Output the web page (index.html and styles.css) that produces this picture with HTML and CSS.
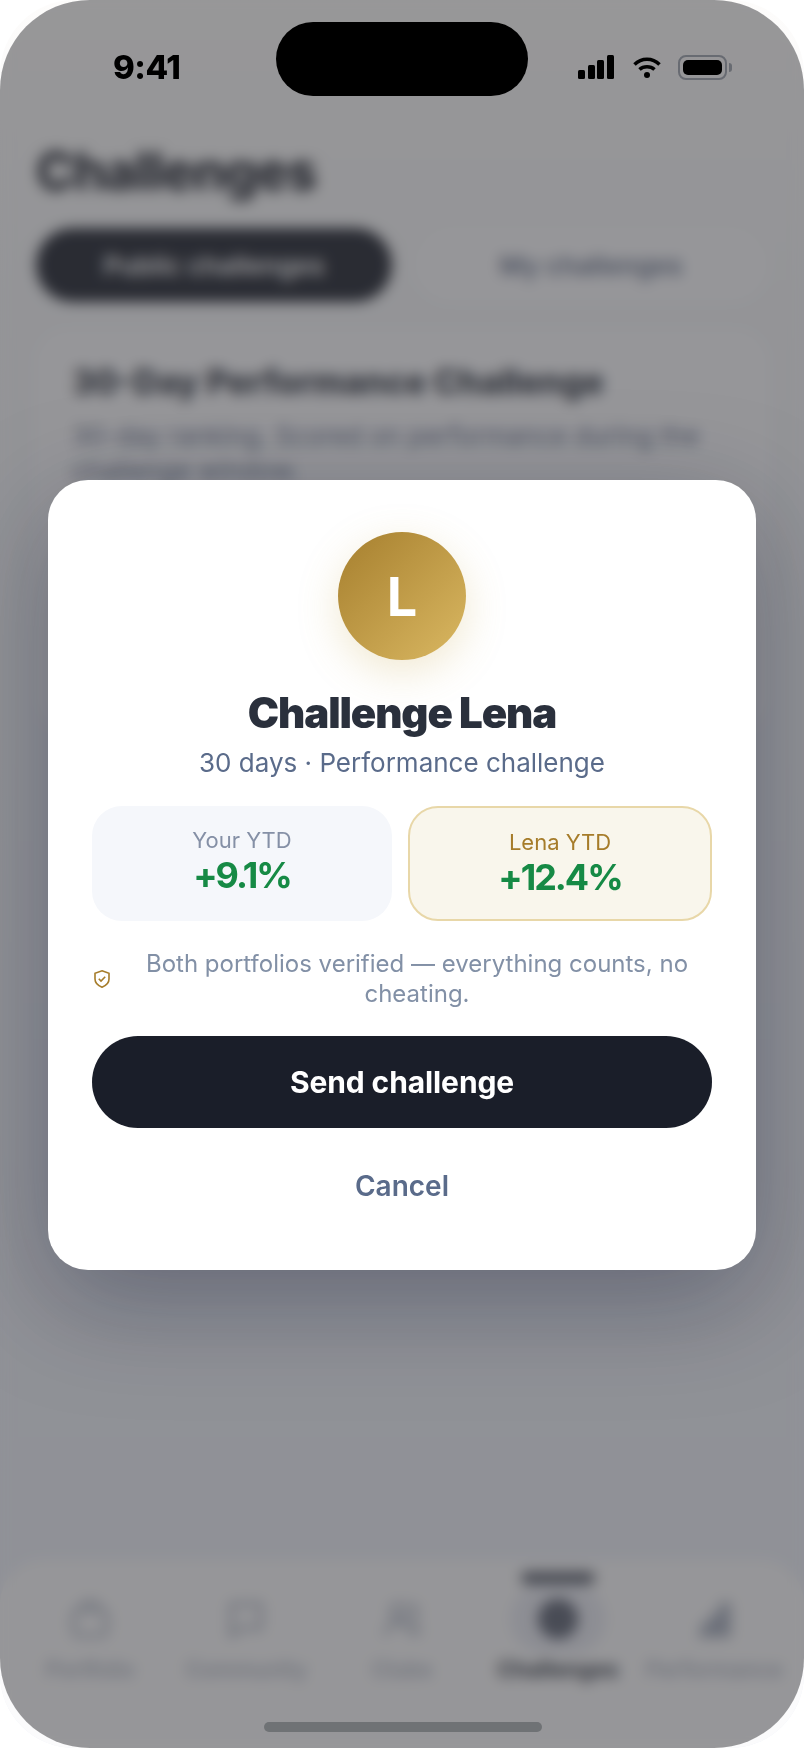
FILE: index.html
```html
<!DOCTYPE html>
<html lang="en">
<head>
<meta charset="UTF-8">
<meta name="viewport" content="width=device-width, initial-scale=1.0">
<title>Challenge Lena</title>
<link rel="stylesheet" href="styles.css">
</head>
<body>
<div class="phone">
  <!-- screen behind the modal -->
  <div class="screen">
    <div class="content">
      <h1 class="page-title">Challenges</h1>
      <div class="tabs">
        <div class="tab tab-active">Public challenges</div>
        <div class="tab">My challenges</div>
      </div>
      <div class="card">
        <h3 class="card-title">30-Day Performance Challenge</h3>
        <p class="card-text">30-day ranking. Scored on performance during the challenge window.</p>
      </div>
    </div>
    <nav class="tabbar">
      <div class="nav-item">
        <svg class="nav-icon" viewBox="0 0 24 24"><rect x="3" y="7" width="18" height="14" rx="3"/><path d="M8 7V5a2 2 0 0 1 2-2h4a2 2 0 0 1 2 2v2"/></svg>
        <span>Portfolio</span>
      </div>
      <div class="nav-item">
        <svg class="nav-icon" viewBox="0 0 24 24"><path d="M4 4h16v13H9l-5 4z"/></svg>
        <span>Community</span>
      </div>
      <div class="nav-item">
        <svg class="nav-icon" viewBox="0 0 24 24"><circle cx="10" cy="8" r="4"/><path d="M3 21c0-4 3-7 7-7s7 3 7 7M16 4a4 4 0 0 1 0 8M18 14c2 1 3 4 3 7"/></svg>
        <span>Clubs</span>
      </div>
      <div class="nav-item nav-active">
        <div class="nav-marker"></div>
        <div class="nav-halo"><svg class="nav-icon" viewBox="0 0 24 24"><circle cx="12" cy="12" r="10" fill="currentColor"/></svg></div>
        <span>Challenges</span>
      </div>
      <div class="nav-item">
        <svg class="nav-icon" viewBox="0 0 24 24"><path d="M3 21h18M6 21v-6h4v6M11 21V10h4v11M16 21V4h4v17" fill="currentColor"/></svg>
        <span>Performance</span>
      </div>
    </nav>
  </div>

  <div class="overlay">
    <div class="modal">
      <div class="avatar">L</div>
      <h2 class="modal-title">Challenge Lena</h2>
      <p class="modal-sub">30 days · Performance challenge</p>
      <div class="stats">
        <div class="stat">
          <div class="stat-label">Your YTD</div>
          <div class="stat-value">+9.1%</div>
        </div>
        <div class="stat stat-gold">
          <div class="stat-label">Lena YTD</div>
          <div class="stat-value">+12.4%</div>
        </div>
      </div>
      <div class="note">
        <svg class="note-icon" viewBox="0 0 18 20"><path d="M9 1.800 16 4.200V10c0 4-3 6.600-7 8.200C5 16.600 2 14 2 10V4.200z"/><path d="M5.800 9.800 8 12l4.200-4.200"/></svg>
        <p>Both portfolios verified — everything counts, no cheating.</p>
      </div>
      <button class="btn-send">Send challenge</button>
      <button class="btn-cancel">Cancel</button>
    </div>
  </div>

  <div class="statusbar">
    <span class="time">9:41</span>
    <div class="status-icons">
      <svg width="36" height="24" viewBox="0 0 36 24"><rect x="0" y="15" width="7" height="9" rx="1.500"/><rect x="10" y="10" width="7" height="14" rx="1.500"/><rect x="19" y="5" width="7" height="19" rx="1.500"/><rect x="29" y="0" width="7" height="24" rx="1.500"/></svg>
      <svg class="wifi" width="28" height="21" viewBox="0 0 28 21"><path d="M1.500 7.500C8.500 0.500 19.500 0.500 26.500 7.500M6.500 12.500C10.500 8.700 17.500 8.700 21.500 12.500"/><circle cx="14" cy="18" r="3"/></svg>
      <div class="battery"><div class="battery-fill"></div></div>
      <div class="battery-tip"></div>
    </div>
  </div>
  <div class="island"></div>
  <div class="home-bar"></div>
</div>
</body>
</html>
```

FILE: styles.css
```css
* {
  box-sizing: border-box;
}
body {
  margin: 0;
  background: #fff;
  font-family: Inter, "Liberation Sans", sans-serif;
}
h1, h2, h3, p {
  margin: 0;
}
.phone {
  position: relative;
  width: 804px;
  height: 1748px;
  border-radius: 74px;
  overflow: hidden;
  background: #f1f3f8;
}

/* underlying screen */
.screen {
  height: 100%;
  display: flex;
  flex-direction: column;
  background: linear-gradient(#fdfcfb 0, #f6f7f9 300px, #eef1f9 1500px);
}
.content {
  flex: 1;
  padding: 142px 36px 0;
}
.page-title {
  font-size: 52px;
  line-height: 60px;
  font-weight: 800;
  color: #1a1e29;
  letter-spacing: -1px;
}
.tabs {
  display: flex;
  gap: 22px;
  margin-top: 26px;
}
.tab {
  flex: 1;
  height: 74px;
  border-radius: 37px;
  display: flex;
  align-items: center;
  justify-content: center;
  font-size: 26px;
  font-weight: 600;
  color: #64708a;
  background: #fbfbfd;
}
.tab-active {
  flex: 1.005;
  background: #1a1e29;
  color: #fff;
}
.card {
  margin-top: 28px;
  padding: 32px 36px;
  height: 400px;
  border-radius: 32px;
  background: #fbfbfd;
}
.card-title {
  font-size: 34px;
  line-height: 40px;
  font-weight: 800;
  color: #2a303c;
}
.card-text {
  margin-top: 16px;
  font-size: 26px;
  line-height: 35px;
  color: #64708a;
}
.tabbar {
  height: 188px;
  padding: 37px 12px 0;
  display: flex;
  border-radius: 44px 44px 0 0;
  background: #fbfbfc;
}
.nav-item {
  position: relative;
  flex: 1;
  display: flex;
  flex-direction: column;
  align-items: center;
  gap: 15px;
  font-size: 22px;
  line-height: 26px;
  font-weight: 500;
  white-space: nowrap;
  color: #a3abbb;
}
.nav-icon {
  width: 44px;
  height: 44px;
  fill: none;
  stroke: currentColor;
  stroke-width: 2;
}
.nav-active {
  color: #2a303c;
  font-weight: 700;
}
.nav-active .nav-icon {
  color: #5a6070;
}
.nav-marker {
  position: absolute;
  top: -25px;
  width: 74px;
  height: 12px;
  border-radius: 6px;
  background: #4f5563;
}
.nav-halo {
  width: 72px;
  height: 44px;
  display: flex;
  justify-content: center;
  background: #e8eaf2;
  border-radius: 22px;
  box-shadow: 0 0 0 12px #e8eaf2;
}

/* scrim + modal */
.overlay {
  position: absolute;
  inset: 0;
  display: flex;
  align-items: center;
  padding: 2px 48px 0;
  border-radius: 90px;
  overflow: hidden;
  background: rgba(58, 58, 62, 0.52);
  backdrop-filter: blur(7px);
}
.modal {
  width: 100%;
  padding: 52px 44px 54px;
  display: flex;
  flex-direction: column;
  align-items: center;
  background: #fff;
  border-radius: 40px;
  box-shadow: 0 30px 110px rgba(20, 28, 55, 0.36);
}
.avatar {
  width: 128px;
  height: 128px;
  border-radius: 50%;
  display: flex;
  align-items: center;
  justify-content: center;
  font-size: 54px;
  font-weight: 700;
  color: #fff;
  background: linear-gradient(135deg, #a67f2e, #dab862);
  box-shadow: 0 12px 40px rgba(201, 168, 76, 0.25);
}
.modal-title {
  margin-top: 29px;
  font-size: 42px;
  line-height: 48px;
  font-weight: 900;
  letter-spacing: -1.100px;
  color: #2a303c;
}
.modal-sub {
  margin-top: 9px;
  font-size: 26px;
  line-height: 34px;
  color: #5a6b8a;
}
.stats {
  width: 100%;
  display: flex;
  gap: 16px;
  margin-top: 26px;
}
.stat {
  flex: 1;
  padding: 19px 16px 22px;
  border-radius: 30px;
  text-align: center;
  background: #f5f7fb;
}
.stat-gold {
  background: #f9f6ec;
  border: 2px solid #e8d7a8;
}
.stat-label {
  font-size: 22px;
  line-height: 30px;
  color: #8590a6;
}
.stat-gold .stat-label {
  color: #a67c2a;
}
.stat-value {
  font-size: 36px;
  line-height: 40px;
  font-weight: 700;
  letter-spacing: -2px;
  color: #168a45;
}
.note {
  width: 100%;
  display: flex;
  align-items: center;
  gap: 11px;
  margin-top: 28px;
}
.note-icon {
  flex: none;
  width: 18px;
  height: 20px;
  margin-left: 1px;
  fill: none;
  stroke: #a67c2a;
  stroke-width: 1.6;
}
.note p {
  flex: 1;
  font-size: 24px;
  line-height: 30px;
  text-align: center;
  color: #8290a6;
}
.btn-send {
  width: 100%;
  height: 92px;
  margin-top: 27px;
  border: 0;
  border-radius: 46px;
  background: #1a1e29;
  color: #fff;
  font: 700 30px Inter, sans-serif;
  letter-spacing: -0.1px;
}
.btn-cancel {
  width: 100%;
  height: 60px;
  margin-top: 28px;
  border: 0;
  background: none;
  color: #5a6b8a;
  font: 600 28px Inter, sans-serif;
}

/* system chrome */
.statusbar {
  position: absolute;
  top: 54px;
  left: 113px;
  right: 72px;
  display: flex;
  justify-content: space-between;
  align-items: center;
}
.time {
  font: 800 33px/26px Inter, sans-serif;
  letter-spacing: -0.5px;
  color: #000;
}
.status-icons {
  display: flex;
  align-items: center;
}
.wifi {
  margin-left: 19px;
  fill: #000;
}
.wifi path {
  fill: none;
  stroke: #000;
  stroke-width: 3.5;
}
.battery {
  width: 49px;
  height: 25px;
  margin-left: 17px;
  padding: 3px;
  border: 2px solid #686b72;
  border-radius: 8px;
}
.battery-fill {
  height: 100%;
  border-radius: 5px;
  background: #000;
}
.battery-tip {
  width: 3px;
  height: 9px;
  margin-left: 2px;
  border-radius: 0 3px 3px 0;
  background: #686b72;
}
.island {
  position: absolute;
  top: 22px;
  left: 276px;
  width: 252px;
  height: 74px;
  border-radius: 37px;
  background: #000;
}
.home-bar {
  position: absolute;
  top: 1722px;
  left: 264px;
  width: 278px;
  height: 10px;
  border-radius: 5px;
  background: #6f7275;
}
```
